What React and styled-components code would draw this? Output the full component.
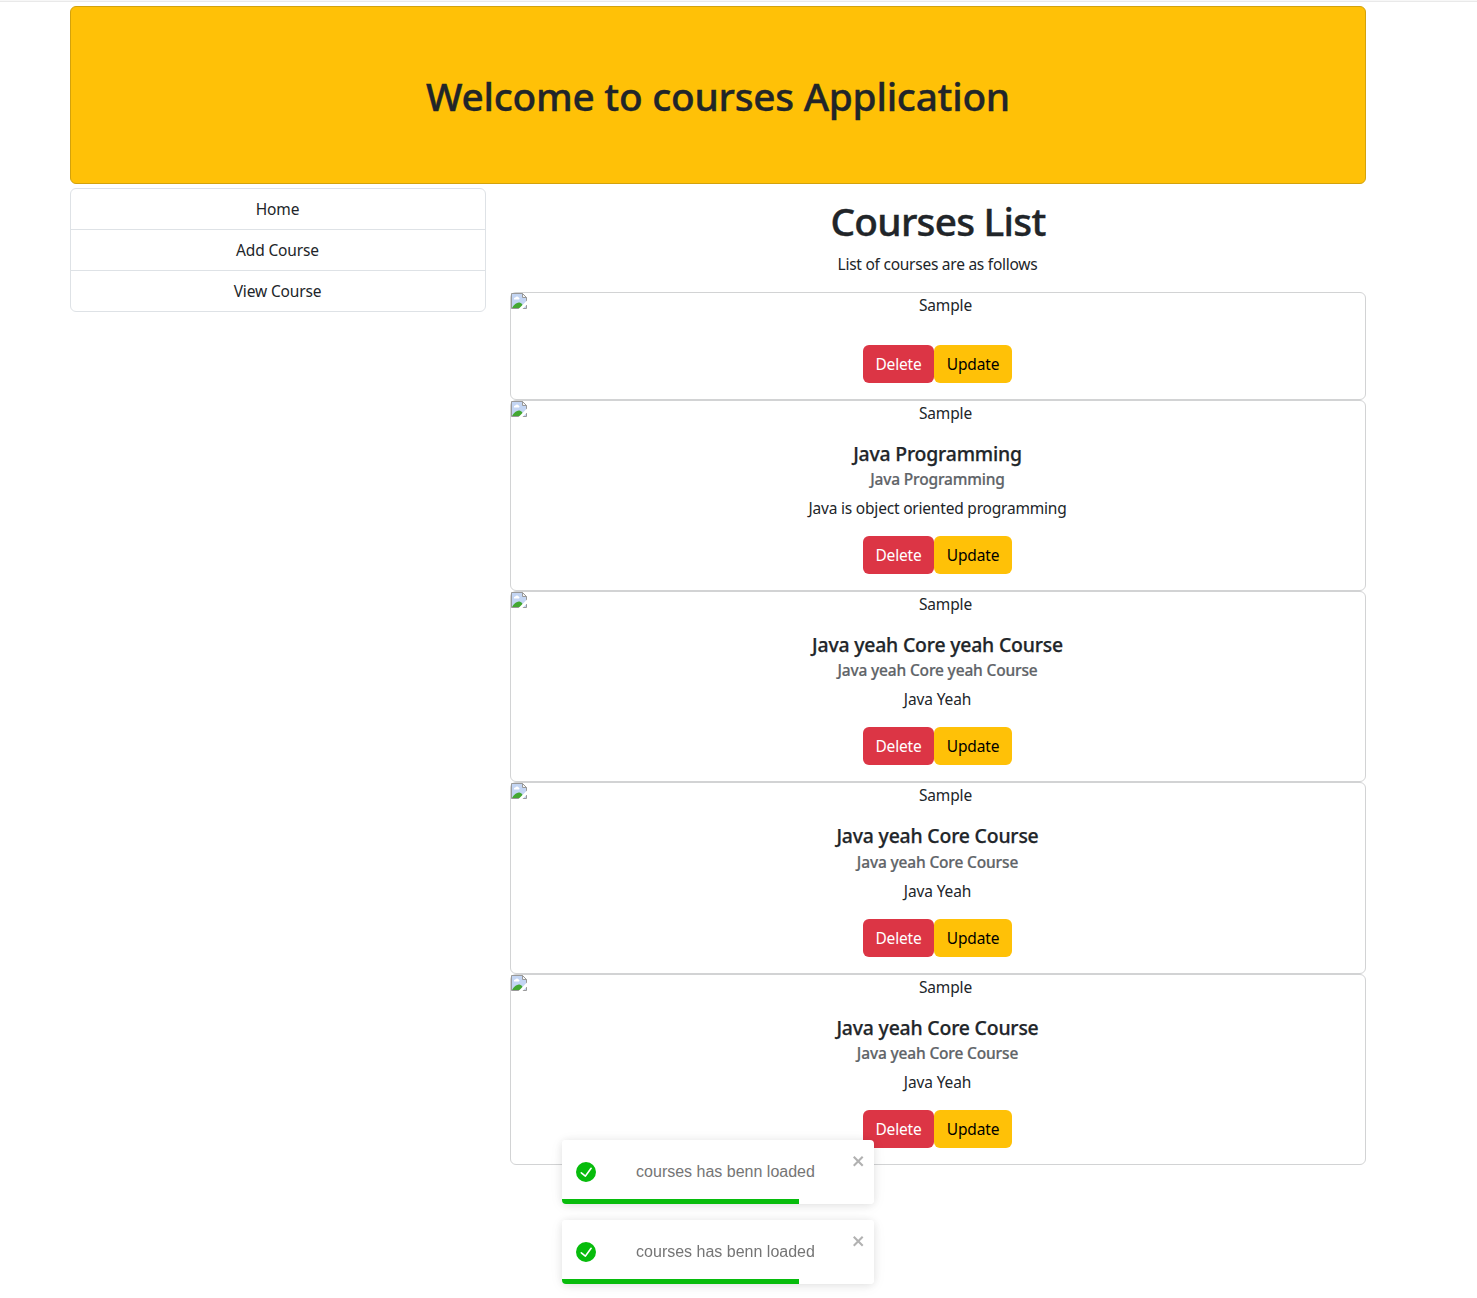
import React from "react";
import styled, { createGlobalStyle } from "styled-components";

const GlobalStyle = createGlobalStyle`
  *, *::before, *::after { box-sizing: border-box; }
  body {
    margin: 0;
    background: #fff;
    color: #212529;
    font-family: "Segoe UI", "Noto Sans", "Liberation Sans", sans-serif;
    font-size: 15.5px;
    line-height: 24px;
    letter-spacing: -0.15px;
    overflow: hidden;
  }
`;

const Page = styled.div`
  width: 1436px;
  height: 1298px;
  text-align: center;
`;

const TopRule = styled.div`
  width: 1477px;
  height: 2px;
  margin-bottom: 4px;
  background: linear-gradient(#f7f7f7 50%, #e9e9e9 50%);
`;

const Container = styled.main`
  width: 1320px;
  margin: 0 auto;
  padding: 0 12px;
`;

const Banner = styled.header`
  height: 178px;
  margin-bottom: 4px;
  padding: 64px 16px;
  background: #ffc107;
  border: 1px solid #d3a20c;
  border-radius: 6px;
`;

const Heading = styled.h1`
  margin: 0 0 8px;
  padding-top: 2px;
  font-size: 38.8px;
  font-weight: 500;
  line-height: 46px;
  letter-spacing: ${(p) => p.$tracking}px;
  -webkit-text-stroke: 0.4px currentColor;
`;

const Columns = styled.div`
  display: grid;
  grid-template-columns: 416px 856px;
  gap: 24px;
  align-items: start;
`;

const Menu = styled.nav`
  display: flex;
  flex-direction: column;
  border: 1px solid #dee2e6;
  border-radius: 6px;
`;

const MenuItem = styled.a`
  height: 41px;
  padding: 8px 17px 8px 16px;
  color: #212529;
  text-decoration: none;
  border-bottom: 1px solid #dee2e6;
  &:last-child { height: 40px; border-bottom: 0; }
`;

const Courses = styled.section`
  padding-top: 8px;
`;

const Text = styled.p`
  margin: 0 0 16px;
  padding-right: 1px;
  letter-spacing: ${(p) => p.$tracking ?? -0.12}px;
`;

const Card = styled.article`
  border: 1px solid #d2d3d4;
  border-radius: 6px;
`;

const ImageRow = styled.div`
  display: flex;
  height: 24px;
`;

const BrokenImage = styled.svg`
  flex: none;
  width: 16px;
  height: 16px;
`;

const Alt = styled.span`
  flex: 1;
  padding-right: 1px;
`;

const CardBody = styled.div`
  padding: 16px;
`;

const CardTitle = styled.h5`
  margin: 0 0 8px;
  padding-right: 1px;
  font-size: 19.4px;
  font-weight: 500;
  line-height: 24px;
  letter-spacing: -0.18px;
  -webkit-text-stroke: 0.25px currentColor;
  &:not(:empty) { padding-top: 2px; line-height: 22px; }
`;

const CardSubtitle = styled.h6`
  margin: -4px 0 8px;
  padding-right: 1px;
  color: #5f6468;
  font-size: 15.5px;
  font-weight: 500;
  line-height: 19.2px;
  letter-spacing: -0.16px;
  -webkit-text-stroke: 0.2px currentColor;
  &:not(:empty) { padding-top: 2.2px; line-height: 17px; }
`;

const Actions = styled.div`
  display: flex;
  justify-content: center;
  padding-right: 1px;
`;

const Button = styled.button`
  width: ${(p) => p.$width}px;
  height: 38px;
  padding: 0;
  border: 0;
  border-radius: 6px;
  background: ${(p) => p.$bg};
  color: ${(p) => p.$color};
  font: inherit;
  letter-spacing: inherit;
`;

const Toasts = styled.aside`
  position: fixed;
  left: 562px;
  bottom: 14px;
  width: 312px;
  display: flex;
  flex-direction: column;
  gap: 16px;
`;

const Toast = styled.div`
  position: relative;
  display: flex;
  align-items: center;
  height: 64px;
  padding: 0 14px;
  overflow: hidden;
  background: #fff;
  border-radius: 4px;
  color: #757575;
  font: 16px/24px "Liberation Sans", Arial, sans-serif;
  letter-spacing: 0;
`;

const ToastShadow = styled.div`
  border-radius: 4px;
  box-shadow: 0 1px 10px rgba(0, 0, 0, 0.1), 0 2px 15px rgba(0, 0, 0, 0.05);
`;

const Check = styled.svg`
  flex: none;
  width: 20px;
  height: 20px;
  fill: #07bc0c;
`;

const Message = styled.span`
  flex: 1;
  padding-left: 3px;
`;

const Close = styled.svg`
  align-self: flex-start;
  flex: none;
  width: 14px;
  height: 16px;
  margin: 13px -6px 0 0;
  fill: #000;
  opacity: 0.3;
`;

const Progress = styled.div`
  position: absolute;
  left: 0;
  bottom: 0;
  width: 237px;
  height: 5px;
  background: #07bc0c;
`;

const courses = [
  {},
  { title: "Java Programming", text: "Java is object oriented programming", tracking: -0.2 },
  { title: "Java yeah Core yeah Course", text: "Java Yeah" },
  { title: "Java yeah Core Course", text: "Java Yeah" },
  { title: "Java yeah Core Course", text: "Java Yeah" },
];

function MissingPicture() {
  return (
    <BrokenImage viewBox="0 0 16 16">
      <path d="M0.5 0.5H11.5L15.5 4.5V15.5H0.5Z" fill="#c3d5f3" stroke="#999" />
      <path d="M3 6.500a1.500 1.500 0 0 1 1.300-2 2 2 0 0 1 3.400 0A1.200 1.200 0 0 1 8 6.500Z" fill="#fff" />
      <path d="M1 15C3 11.500 6 9 8.500 9.500S12 12 12 15Z" fill="#43a832" />
      <path d="M11.500 0.500V4.500H15.500Z" fill="#f6f6f6" stroke="#999" />
      <path d="M16 7.500L7.500 16H11.500L16 11.500Z" fill="#fff" />
    </BrokenImage>
  );
}

function CourseCard({ course }) {
  return (
    <Card>
      <ImageRow>
        <MissingPicture />
        <Alt>Sample</Alt>
      </ImageRow>
      <CardBody>
        <CardTitle>{course.title}</CardTitle>
        <CardSubtitle>{course.title}</CardSubtitle>
        <Text $tracking={course.tracking}>{course.text}</Text>
        <Actions>
          <Button $width={71} $bg="#dc3545" $color="#fff">Delete</Button>
          <Button $width={78} $bg="#ffc107" $color="#000">Update</Button>
        </Actions>
      </CardBody>
    </Card>
  );
}

function LoadedToast() {
  return (
    <ToastShadow>
      <Toast>
        <Check viewBox="0 0 24 24">
          <path d="M12 0a12 12 0 1012 12A12.014 12.014 0 0012 0zm6.927 8.2l-6.845 9.289a1.011 1.011 0 01-1.43.188l-4.888-3.908a1 1 0 111.25-1.562l4.076 3.261 6.227-8.451a1 1 0 111.61 1.183z" />
        </Check>
        <Message>courses has benn loaded</Message>
        <Close viewBox="0 0 14 16">
          <path
            fillRule="evenodd"
            d="M7.71 8.23l3.75 3.75-1.48 1.48-3.75-3.75-3.75 3.75L1 11.98l3.75-3.75L1 4.48 2.48 3l3.75 3.75L9.98 3l1.48 1.48-3.75 3.75z"
          />
        </Close>
        <Progress />
      </Toast>
    </ToastShadow>
  );
}

export default function App() {
  return (
    <>
      <GlobalStyle />
      <Page>
        <TopRule />
        <Container>
          <Banner>
            <Heading $tracking={-0.26}>Welcome to courses Application</Heading>
          </Banner>
          <Columns>
            <Menu>
              <MenuItem>Home</MenuItem>
              <MenuItem>Add Course</MenuItem>
              <MenuItem>View Course</MenuItem>
            </Menu>
            <Courses>
              <Heading $tracking={-0.75}>Courses List</Heading>
              <Text $tracking={-0.25}>List of courses are as follows</Text>
              {courses.map((course, i) => (
                <CourseCard key={i} course={course} />
              ))}
            </Courses>
          </Columns>
        </Container>
        <Toasts>
          <LoadedToast />
          <LoadedToast />
        </Toasts>
      </Page>
    </>
  );
}
